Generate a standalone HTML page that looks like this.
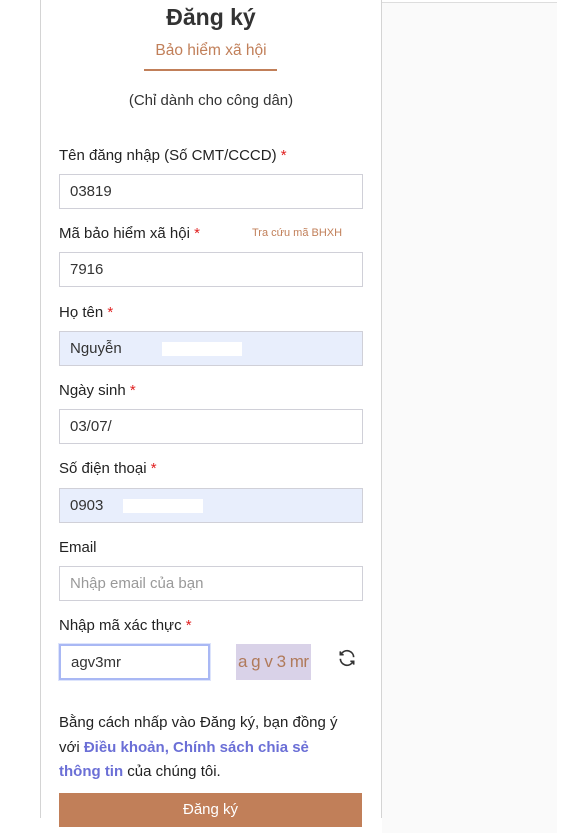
<!DOCTYPE html>
<html><head><meta charset="utf-8"><style>
*{margin:0;padding:0;box-sizing:border-box}
body{width:567px;height:833px;background:#fff;font-family:"Liberation Sans",sans-serif;position:relative;overflow:hidden;color:#222}
.right{position:absolute;left:382px;top:2px;width:175px;height:831px;background:#fafafa;border-top:1px solid #ddd}
.panel{position:absolute;left:40px;top:0;width:342px;height:818px;border-left:1px solid #d4d4d4;border-right:1px solid #d4d4d4;background:#fff}
.a{position:absolute;white-space:nowrap}
.lbl{position:absolute;left:59px;font-size:15px;color:#222}
.lbl b{color:#e02020;font-weight:normal}
.inp{position:absolute;left:59px;width:304px;height:35px;border:1px solid #d0d0d8;background:#fff;font-size:15px;padding:8px 10px;color:#333;white-space:nowrap}
.fill{background:#e8eefc}
</style></head><body>
<div class="right"></div>
<div class="panel"></div>
<div class="a" style="left:40px;width:342px;top:4px;text-align:center;font-size:23px;font-weight:bold;color:#333">Đăng ký</div>
<div class="a" style="left:40px;width:342px;top:42px;text-align:center;font-size:15.5px;color:#c17f59">Bảo hiểm xã hội</div>
<div class="a" style="left:144px;top:69px;width:133px;height:2px;background:#c17f59"></div>
<div class="a" style="left:40px;width:342px;top:92px;text-align:center;font-size:15px;color:#333">(Chỉ dành cho công dân)</div>

<div class="lbl" style="top:147px">Tên đăng nhập (Số CMT/CCCD) <b>*</b></div>
<div class="inp" style="top:174px">03819</div>
<div class="lbl" style="top:225px">Mã bảo hiểm xã hội <b>*</b></div>
<div class="a" style="left:252px;top:227px;font-size:11px;color:#c17f59">Tra cứu mã BHXH</div>
<div class="inp" style="top:252px">7916</div>
<div class="lbl" style="top:304px">Họ tên <b>*</b></div>
<div class="inp fill" style="top:331px">Nguyễn<span style="display:inline-block;width:80px;height:14px;background:#fff;vertical-align:middle;margin-left:40px"></span></div>
<div class="lbl" style="top:382px">Ngày sinh <b>*</b></div>
<div class="inp" style="top:409px">03/07/</div>
<div class="lbl" style="top:460px">Số điện thoại <b>*</b></div>
<div class="inp fill" style="top:488px">0903<span style="display:inline-block;width:80px;height:14px;background:#fff;vertical-align:middle;margin-left:20px"></span></div>
<div class="lbl" style="top:539px">Email</div>
<div class="inp" style="top:566px;color:#999">Nhập email của bạn</div>
<div class="lbl" style="top:617px">Nhập mã xác thực <b>*</b></div>
<div class="inp" style="top:644px;width:151px;height:36px;border:2px solid #a9b8f4;box-shadow:0 0 0 1px #dde4fc">agv3mr</div>
<div class="a" style="left:236px;top:644px;width:75px;height:36px;background:#d9d2e8;color:#b07a5a;font-size:17px;padding:8px 2px;letter-spacing:-0.5px;overflow:hidden">a g v 3 mr</div>
<svg class="a" style="left:337px;top:648px" width="20" height="20" viewBox="0 0 24 24" fill="none" stroke="#333" stroke-width="2"><path d="M20 11a8 8 0 0 0-14-5l-2 2M4 4v4h4M4 13a8 8 0 0 0 14 5l2-2M20 20v-4h-4"/></svg>
<div class="a" style="left:59px;top:711px;width:305px;font-size:15px;line-height:24.5px;color:#222">Bằng cách nhấp vào Đăng ký, bạn đồng ý<br>với <b style="color:#6b6fd6">Điều khoản, Chính sách chia sẻ<br>thông tin</b> của chúng tôi.</div>
<div class="a" style="left:59px;top:793px;width:303px;height:34px;background:#c17f59;color:#fff;text-align:center;font-size:15px;line-height:33px">Đăng ký</div>
</body></html>
